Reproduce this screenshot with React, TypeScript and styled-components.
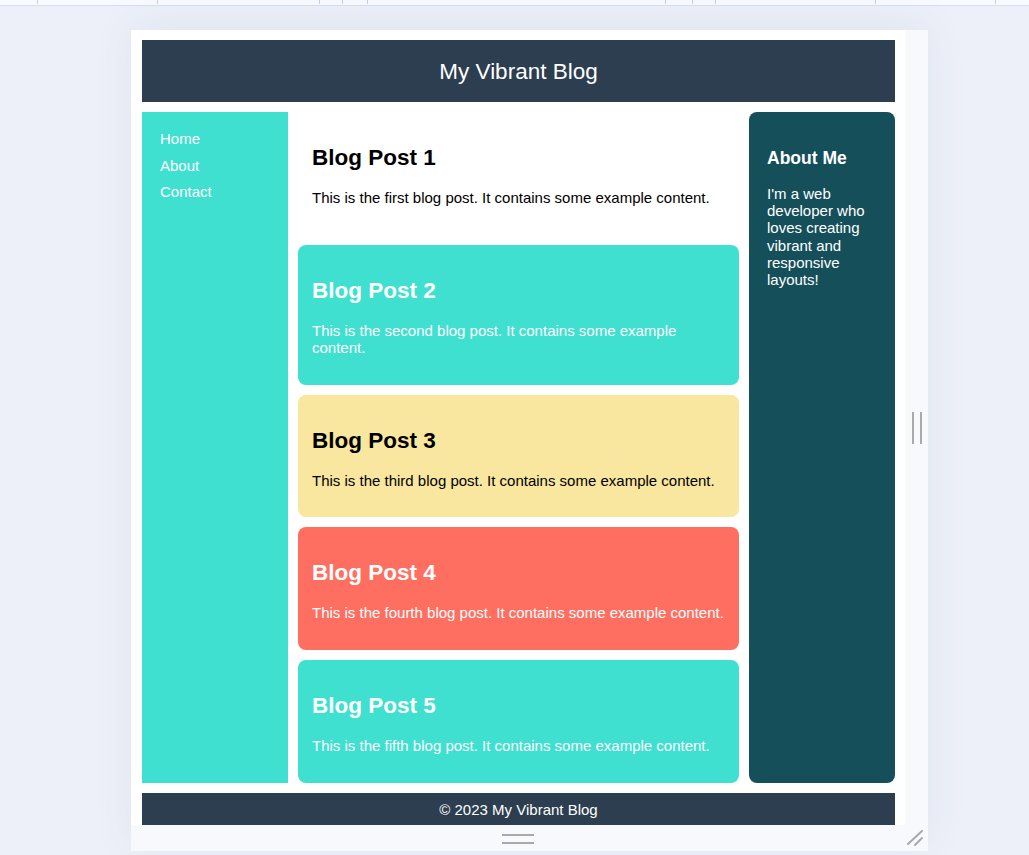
import React from 'react';
import styled, { createGlobalStyle } from 'styled-components';

const GlobalStyle = createGlobalStyle`
  html, body {
    margin: 0;
    padding: 0;
    height: 855px;
    overflow: hidden;
    background: #edf0f8;
    font-family: "Liberation Sans", Arial, sans-serif;
  }
`;

type Tone = 'plain' | 'teal' | 'sun' | 'coral';

const tones: Record<Tone, { bg: string; fg: string; radius: string }> = {
  plain: { bg: '#ffffff', fg: '#000000', radius: '0' },
  teal: { bg: '#40e0d0', fg: '#ffffff', radius: '8px' },
  sun: { bg: '#f9e79f', fg: '#000000', radius: '8px' },
  coral: { bg: '#ff6f61', fg: '#ffffff', radius: '8px' },
};

// Editor chrome
const Page = styled.div`
  display: flex;
  flex-direction: column;
  height: 855px;
`;

const Ruler = styled.svg`
  display: block;
  width: 1029px;
  height: 6px;
  flex: none;
`;

const Stage = styled.div`
  flex: 1;
  padding: 24px 0 0 131px;
`;

const Frame = styled.div`
  display: grid;
  grid-template-columns: 774px 23px;
  grid-template-rows: 795px 26px;
  width: 797px;
  box-shadow: 0 -6px 40px rgba(60, 80, 140, 0.07);
`;

const Viewport = styled.div`
  background: #ffffff;
  overflow: hidden;
  padding: 10px 10px 0 11px;
`;

const Gutter = styled.div`
  background: #f8f9fd;
  display: flex;
  align-items: center;
  justify-content: center;
`;

const Grip = styled.div<{ $vertical?: boolean }>`
  width: ${({ $vertical }) => ($vertical ? '6px' : '32px')};
  height: ${({ $vertical }) => ($vertical ? '32px' : '6px')};
  border-style: solid;
  border-color: #a9a9a9;
  border-width: ${({ $vertical }) => ($vertical ? '0 2px' : '2px 0')};
  margin-top: ${({ $vertical }) => ($vertical ? '0' : '1px')};
`;

const Corner = styled.div`
  background: #f8f9fd;
  display: flex;
  align-items: flex-end;
  justify-content: flex-end;
  padding: 0 5px 5px 0;
`;

// Blog layout
const Blog = styled.div`
  display: grid;
  grid-template-rows: 62px auto 34px;
  row-gap: 10px;
`;

const Header = styled.header`
  background: #2c3e50;
  color: #ffffff;
  display: flex;
  align-items: center;
  justify-content: center;
  font-size: 22.5px;
  padding-top: 1px;
`;

const Columns = styled.div`
  display: grid;
  grid-template-columns: 146px 1fr 146px;
  column-gap: 10px;
`;

const Nav = styled.nav`
  background: #40e0d0;
  padding: 14px 18px;
`;

const NavList = styled.ul`
  list-style: none;
  margin: 0;
  padding: 0;
`;

const NavLink = styled.a`
  display: block;
  color: #ffffff;
  text-decoration: none;
  font-size: 15px;
  line-height: 26.5px;
`;

const Main = styled.main`
  display: flex;
  flex-direction: column;
  gap: 10px;
`;

const Post = styled.article<{ $tone: Tone }>`
  background: ${({ $tone }) => tones[$tone].bg};
  color: ${({ $tone }) => tones[$tone].fg};
  border-radius: ${({ $tone }) => tones[$tone].radius};
  padding: 15px 8px 15px 14px;
`;

const PostTitle = styled.h2`
  margin: 18px 0 18px;
  font-size: 22.5px;
  line-height: 26px;
  font-weight: bold;
`;

const PostText = styled.p`
  margin: 0 0 13.5px;
  font-size: 15px;
  line-height: 17.2px;
`;

const Aside = styled.aside`
  background: #154f5a;
  color: #ffffff;
  border-radius: 8px;
  padding: 18px;
`;

const AsideTitle = styled.h3`
  margin: 18px 0 17px;
  font-size: 17.5px;
  line-height: 20px;
  font-weight: bold;
`;

const AsideText = styled.p`
  margin: 0;
  font-size: 15px;
  line-height: 17.2px;
`;

const Footer = styled.footer`
  background: #2c3e50;
  color: #ffffff;
  display: flex;
  align-items: center;
  justify-content: center;
  font-size: 15px;
`;

const posts: { title: string; text: string; tone: Tone }[] = [
  { title: 'Blog Post 1', text: 'This is the first blog post. It contains some example content.', tone: 'plain' },
  { title: 'Blog Post 2', text: 'This is the second blog post. It contains some example content.', tone: 'teal' },
  { title: 'Blog Post 3', text: 'This is the third blog post. It contains some example content.', tone: 'sun' },
  { title: 'Blog Post 4', text: 'This is the fourth blog post. It contains some example content.', tone: 'coral' },
  { title: 'Blog Post 5', text: 'This is the fifth blog post. It contains some example content.', tone: 'teal' },
];

const ticks = [37, 157, 319, 342, 367, 665, 692, 715, 875, 995];

const App = () => (
  <>
    <GlobalStyle />
    <Page>
      <Ruler viewBox="0 0 1029 6">
        <rect x="0" y="0" width="1029" height="5" fill="#f8faff" />
        <rect x="0" y="5" width="1029" height="1" fill="#d6dff1" />
        {ticks.map((x) => (
          <rect key={x} x={x} y="0" width="1" height="4" fill="#c3d1ec" />
        ))}
      </Ruler>
      <Stage>
        <Frame>
          <Viewport>
            <Blog>
              <Header>My Vibrant Blog</Header>
              <Columns>
                <Nav>
                  <NavList>
                    <li><NavLink href="#">Home</NavLink></li>
                    <li><NavLink href="#">About</NavLink></li>
                    <li><NavLink href="#">Contact</NavLink></li>
                  </NavList>
                </Nav>
                <Main>
                  {posts.map((p) => (
                    <Post key={p.title} $tone={p.tone}>
                      <PostTitle>{p.title}</PostTitle>
                      <PostText>{p.text}</PostText>
                    </Post>
                  ))}
                </Main>
                <Aside>
                  <AsideTitle>About Me</AsideTitle>
                  <AsideText>
                    I'm a web developer who loves creating vibrant and responsive layouts!
                  </AsideText>
                </Aside>
              </Columns>
              <Footer>© 2023 My Vibrant Blog</Footer>
            </Blog>
          </Viewport>
          <Gutter>
            <Grip $vertical />
          </Gutter>
          <Gutter>
            <Grip />
          </Gutter>
          <Corner>
            <svg width="16" height="16" viewBox="0 0 16 16">
              <line x1="15" y1="1" x2="1" y2="14" stroke="#a9a9a9" strokeWidth="2" strokeLinecap="round" />
              <line x1="15" y1="8" x2="8" y2="15" stroke="#a9a9a9" strokeWidth="2" strokeLinecap="round" />
            </svg>
          </Corner>
        </Frame>
      </Stage>
    </Page>
  </>
);

export default App;
